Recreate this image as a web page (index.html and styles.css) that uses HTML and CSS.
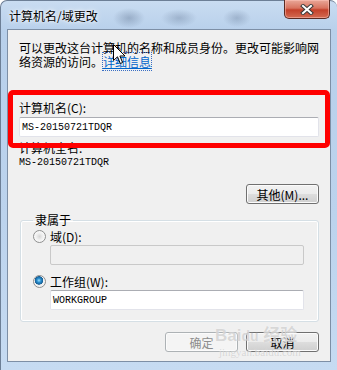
FILE: index.html
```html
<html>
<head>
	<title>计算机名/域更改</title>
	<link rel="stylesheet" href="styles.css">
</head>
<body>
	<div class="window">
		<div class="titlebar">
			<span class="title">计算机名/域更改</span>
			<div class="close">
				<svg width="14" height="11" viewBox="0 0 14 11">
					<path d="M3 2 L11 9 M11 2 L3 9" stroke="#3a3a3a" stroke-width="4" stroke-linecap="square"/>
					<path d="M3 2 L11 9 M11 2 L3 9" stroke="#ffffff" stroke-width="2" stroke-linecap="square"/>
				</svg>
			</div>
		</div>
		<div class="client">
			<p class="desc">可以更改这台计算机的名称和成员身份。更改可能影响网<br>络资源的访问。<a href="#" class="link">详细信息</a></p>
			<div class="label name-label">计算机名(C):</div>
			<div class="field"><span class="mono">MS-20150721TDQR</span></div>
			<div class="label full-label">计算机全名:</div>
			<div class="mono value">MS-20150721TDQR</div>
			<div class="row-right"><button class="btn">其他(M)...</button></div>
			<fieldset class="group">
				<legend>隶属于</legend>
				<div class="radio-row"><span class="radio"></span>域(D):</div>
				<div class="field indent disabled"></div>
				<div class="radio-row second"><span class="radio checked"></span>工作组(W):</div>
				<div class="field indent"><span class="mono">WORKGROUP</span></div>
			</fieldset>
			<div class="actions">
				<button class="btn" disabled>确定</button>
				<button class="btn">取消</button>
			</div>

			<!-- annotation overlays -->
			<div class="highlight"></div>
			<div class="watermark">
				<div class="wm-brand">Bai<span class="wm-paw">du</span> 经验</div>
				<div class="wm-url">jingyan.baidu.com</div>
			</div>
			<svg class="cursor" width="13" height="21" viewBox="0 0 13 21">
				<path d="M0.5 0.5 L0.5 16.5 L4.5 12.8 L7.3 19.5 L9.6 18.5 L6.9 12 L12 12 Z" fill="#ffffff" stroke="#000000" stroke-width="1" stroke-linejoin="miter"/>
			</svg>
		</div>
	</div>
</body>
</html>
```

FILE: styles.css
```css
body {
	margin: 0;
	background-color: #ffffff;
	font-family: "Noto Sans CJK SC", "Liberation Sans", sans-serif;
	font-size: 12px;
	color: #000000;
}
.window {
	width: 337px;
	height: 370px;
	box-sizing: border-box;
	border-radius: 7px 7px 0 0;
	border: 1px solid #6d7f96;
	border-bottom: none;
	border-right: none;
	display: flex;
	flex-direction: column;
	background:
		radial-gradient(ellipse 16px 10px at 128px 17px, rgba(80, 100, 130, 0.35), transparent),
		radial-gradient(ellipse 18px 9px at 178px 17px, rgba(80, 100, 130, 0.3), transparent),
		radial-gradient(ellipse 14px 9px at 236px 17px, rgba(80, 100, 130, 0.3), transparent),
		linear-gradient(#c9dcf1, #b8d0eb 30px, #bcd3ed 60%, #c6dbf2);
}
.titlebar {
	height: 28px;
	display: flex;
	align-items: center;
	padding-left: 8px;
}
.title {
	color: #000000;
	text-shadow: 0 0 6px #ffffff, 0 0 3px #ffffff;
}
.close {
	margin-left: auto;
	margin-right: 7px;
	align-self: flex-start;
	margin-top: -1px;
	width: 46px;
	height: 19px;
	box-sizing: border-box;
	border: 1px solid #5a2a22;
	border-top: none;
	border-radius: 0 0 5px 5px;
	background: linear-gradient(#e9a899, #d8735f 45%, #c3402a 55%, #d36b52);
	box-shadow: inset 0 0 0 1px rgba(255, 200, 190, 0.5);
	display: flex;
	align-items: center;
	justify-content: center;
}
.client {
	position: relative;
	flex: 1;
	margin: 0 6px 8px 6px;
	border: 1px solid #7d8fa6;
	background-color: #f0f0f0;
	padding: 11px 11px 0 11px;
	display: flex;
	flex-direction: column;
}
.desc {
	margin: 0;
	line-height: 14px;
	white-space: nowrap;
}
.link {
	color: #0066cc;
	text-decoration: underline;
	outline: 1px dotted #3a6fc4;
}
.label {
	line-height: 14px;
}
.name-label {
	margin-top: 32px;
}
.full-label {
	margin-top: 4px;
}
.mono {
	font-family: "Liberation Mono", monospace;
	font-size: 10px;
}
.value {
	line-height: 14px;
	margin-top: 1px;
}
.field {
	height: 20px;
	box-sizing: border-box;
	margin-top: 2px;
	border: 1px solid #e2e3ea;
	border-top-color: #abadb3;
	border-radius: 2px;
	background-color: #ffffff;
	padding: 0 2px;
	display: flex;
	align-items: center;
}
.field.disabled {
	background-color: #f0f0f0;
	border-color: #c9c9c9;
}
.row-right {
	display: flex;
	justify-content: flex-end;
	margin-top: 14px;
}
.btn {
	width: 73px;
	height: 20px;
	padding: 0;
	font-family: "Noto Sans CJK SC", "Liberation Sans", sans-serif;
	font-size: 12px;
	color: #000000;
	border: 1px solid #707070;
	border-radius: 3px;
	background: linear-gradient(#f2f2f2, #ebebeb 50%, #dddddd 50%, #cfcfcf);
	box-shadow: inset 0 0 0 1px #fbfbfb;
}
.btn:disabled {
	color: #8d8d8d;
	border-color: #adb2b5;
	background: #f4f4f4;
}
.group {
	margin: 9px 0 0 1px;
	padding: 2px 14px 11px 12px;
	border: 1px solid #d5dfe5;
	border-radius: 3px;
	box-shadow: inset 0 0 0 1px #ffffff;
}
.group legend {
	padding: 0 2px;
	line-height: 14px;
}
.radio-row {
	display: flex;
	align-items: center;
	height: 14px;
	gap: 4px;
}
.radio-row.second {
	margin-top: 9px;
}
.radio {
	width: 13px;
	height: 13px;
	box-sizing: border-box;
	border-radius: 50%;
	border: 1px solid #8e8f8f;
	background: radial-gradient(circle at 50% 50%, #d6d6d6 0, #eeeeee 3px, #f7f7f7 5px);
}
.radio.checked {
	background:
		radial-gradient(circle at 45% 40%, #9ee2ff 0, #2a8fd0 2px, #175e94 4px, transparent 4.5px),
		radial-gradient(circle, #e4e4e4 0, #f6f6f6 6px);
}
.indent {
	margin-left: 17px;
}
.actions {
	display: flex;
	justify-content: flex-end;
	gap: 8px;
	margin-top: 10px;
}

/* overlays */
.highlight {
	position: absolute;
	left: 0;
	top: 60px;
	width: 322px;
	height: 58px;
	box-sizing: border-box;
	border: 5px solid #ff0000;
	border-radius: 5px;
}
.watermark {
	position: absolute;
	left: 207px;
	top: 296px;
	color: rgba(185, 185, 185, 0.55);
	text-shadow: 0 0 1px rgba(255, 255, 255, 0.8);
	pointer-events: none;
}
.wm-brand {
	font-family: "Liberation Sans", "Noto Sans CJK SC", sans-serif;
	font-size: 17px;
	font-weight: bold;
	line-height: 20px;
}
.wm-paw {
	font-size: 14px;
}
.wm-url {
	font-family: "Liberation Serif", serif;
	font-size: 11px;
	line-height: 12px;
	margin-left: 4px;
}
.cursor {
	position: absolute;
	left: 105px;
	top: 14px;
}
```
